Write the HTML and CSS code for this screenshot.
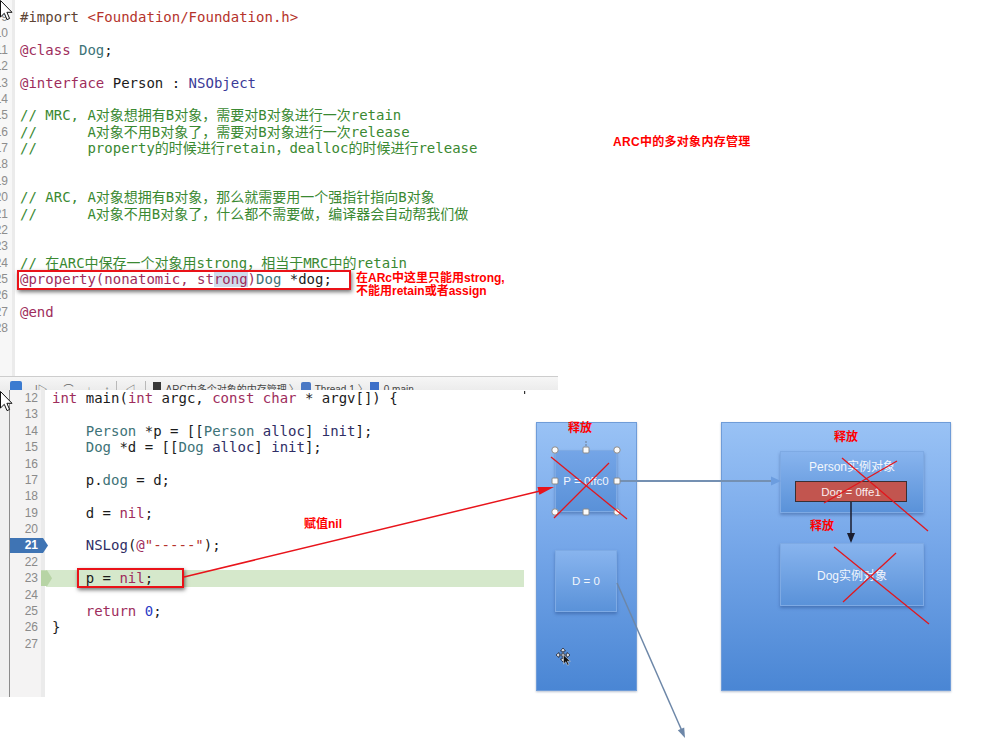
FILE: index.html
```html
<!DOCTYPE html>
<html lang="zh-CN">
<head>
<meta charset="utf-8">
<title>ARC中的多对象内存管理</title>
<link rel="stylesheet" href="styles.css">
</head>
<body>
<div class="page">
  <div class="top">
    <div class="editor-top">
      <div class="code-top">
        <div class="row"><span class="num">9</span><span class="src"><span class="p">#import</span> <span class="s">&lt;Foundation/Foundation.h&gt;</span></span></div>
        <div class="row"><span class="num">10</span><span class="src"></span></div>
        <div class="row"><span class="num">11</span><span class="src"><span class="k">@class</span> <span class="t">Dog</span>;</span></div>
        <div class="row"><span class="num">12</span><span class="src"></span></div>
        <div class="row"><span class="num">13</span><span class="src"><span class="k">@interface</span> Person : <span class="f">NSObject</span></span></div>
        <div class="row"><span class="num">14</span><span class="src"></span></div>
        <div class="row"><span class="num">15</span><span class="src c">// MRC, A对象想拥有B对象，需要对B对象进行一次retain</span></div>
        <div class="row"><span class="num">16</span><span class="src c">//      A对象不用B对象了，需要对B对象进行一次release</span></div>
        <div class="row"><span class="num">17</span><span class="src c">//      property的时候进行retain，dealloc的时候进行release</span></div>
        <div class="row"><span class="num">18</span><span class="src"></span></div>
        <div class="row"><span class="num">19</span><span class="src"></span></div>
        <div class="row"><span class="num">20</span><span class="src c">// ARC, A对象想拥有B对象，那么就需要用一个强指针指向B对象</span></div>
        <div class="row"><span class="num">21</span><span class="src c">//      A对象不用B对象了，什么都不需要做，编译器会自动帮我们做</span></div>
        <div class="row"><span class="num">22</span><span class="src"></span></div>
        <div class="row"><span class="num">23</span><span class="src"></span></div>
        <div class="row"><span class="num">24</span><span class="src c">// 在ARC中保存一个对象用strong，相当于MRC中的retain</span></div>
        <div class="row"><span class="num">25</span><span class="src"><span class="k">@property(nonatomic, st<span class="sel">rong</span>)</span><span class="t">Dog</span> *dog;</span></div>
        <div class="row"><span class="num">26</span><span class="src"></span></div>
        <div class="row"><span class="num">27</span><span class="src"><span class="k">@end</span></span></div>
        <div class="row"><span class="num">28</span><span class="src"></span></div>
      </div>
      <div class="jumpbar">
        <span class="jb-blue"></span>
        <span class="jb-txt jb-a">|▷</span>
        <span class="jb-txt jb-b">⌒</span>
        <span class="jb-txt jb-c">↓</span>
        <span class="jb-txt jb-d">↑</span>
        <span class="jb-sep jb-e"></span>
        <span class="jb-txt jb-f">◁</span>
        <span class="jb-sep jb-g"></span>
        <span class="jb-file"></span>
        <span class="jb-txt jb-h">ARC中多个对象的内存管理</span>
        <span class="jb-txt jb-i">〉</span>
        <span class="jb-thread"></span>
        <span class="jb-txt jb-j">Thread 1</span>
        <span class="jb-txt jb-k">〉</span>
        <span class="jb-frame"></span>
        <span class="jb-txt jb-l">0 main</span>
      </div>
      <div class="redbox redbox-top"></div>
      <div class="note note-strong">在ARc中这里只能用strong,<br>不能用retain或者assign</div>
    </div>
    <div class="aside">
      <p class="title">ARC中的多对象内存管理</p>
    </div>
  </div>

  <div class="bottom">
    <div class="editor-bottom">
      <div class="row2"><span class="num2">12</span><span class="src2"><span class="k">int</span> main(<span class="k">int</span> argc, <span class="k">const</span> <span class="k">char</span> * argv[]) {</span></div>
      <div class="row2"><span class="num2">13</span><span class="src2"></span></div>
      <div class="row2"><span class="num2">14</span><span class="src2">    <span class="t">Person</span> *p = [[<span class="t">Person</span> <span class="m">alloc</span>] <span class="m">init</span>];</span></div>
      <div class="row2"><span class="num2">15</span><span class="src2">    <span class="t">Dog</span> *d = [[<span class="t">Dog</span> <span class="m">alloc</span>] <span class="m">init</span>];</span></div>
      <div class="row2"><span class="num2">16</span><span class="src2"></span></div>
      <div class="row2"><span class="num2">17</span><span class="src2">    p.<span class="t">dog</span> = d;</span></div>
      <div class="row2"><span class="num2">18</span><span class="src2"></span></div>
      <div class="row2"><span class="num2">19</span><span class="src2">    d = <span class="k">nil</span>;</span></div>
      <div class="row2"><span class="num2">20</span><span class="src2"></span></div>
      <div class="row2"><span class="num2 bp"><span class="bp-n">21</span></span><span class="src2">    <span class="m">NSLog</span>(<span class="k">@</span><span class="s">"-----"</span>);</span></div>
      <div class="row2"><span class="num2">22</span><span class="src2"></span></div>
      <div class="row2 pc"><span class="num2">23</span><span class="src2">    p = <span class="k">nil</span>;</span></div>
      <div class="row2"><span class="num2">24</span><span class="src2"></span></div>
      <div class="row2"><span class="num2">25</span><span class="src2">    <span class="k">return</span> <span class="n">0</span>;</span></div>
      <div class="row2"><span class="num2">26</span><span class="src2">}</span></div>
      <div class="row2"><span class="num2">27</span><span class="src2"></span></div>
      <div class="redbox redbox-bottom"></div>
    </div>

    <div class="diagram">
      <div class="panel panel-stack">
        <span class="release rel-p">释放</span>
        <div class="node node-p">P = 0ffc0</div>
        <div class="node node-d">D = 0</div>
      </div>
      <div class="panel panel-heap">
        <span class="release rel-person">释放</span>
        <div class="node node-person">
          <span class="node-title">Person实例对象</span>
          <div class="field">Dog = 0ffe1</div>
        </div>
        <span class="release rel-dog">释放</span>
        <div class="node node-dog">Dog实例对象</div>
      </div>
    </div>
  </div>

  <div class="note note-nil">赋值nil</div>

  <svg class="overlay" width="1000" height="748" viewBox="0 0 1000 748">
    <line x1="184" y1="577" x2="540" y2="491" stroke="#e8141b" stroke-width="1.5"/>
    <polygon points="554,487 539.4,494.7 537.5,486.9" fill="#e8141b"/>
    <line x1="619" y1="481" x2="772" y2="481" stroke="#7490b2" stroke-width="2"/>
    <polygon points="781,481 771,476.5 771,485.5" fill="#6c9ddf"/>
    <line x1="617" y1="583" x2="682" y2="731" stroke="#6d87a8" stroke-width="1.5"/>
    <polygon points="685,738 684.2,727.4 677.8,730.2" fill="#6d87a8"/>
    <line x1="851" y1="502" x2="851" y2="534" stroke="#1b1d2e" stroke-width="1.5"/>
    <polygon points="851,543 847,533 855,533" fill="#1b1d2e"/>
    <line x1="586" y1="446" x2="586" y2="440" stroke="#6a7a90" stroke-width="1" stroke-dasharray="2 1"/>
    <g fill="#fbfbfb" stroke="#8a8a8a" stroke-width="1">
      <circle cx="555" cy="450" r="3.2"/>
      <circle cx="617" cy="450" r="3.2"/>
      <circle cx="555" cy="512" r="3.2"/>
      <circle cx="617" cy="512" r="3.2"/>
      <rect x="583" y="447" width="6" height="6" rx="1"/>
      <rect x="583" y="509" width="6" height="6" rx="1"/>
      <rect x="552" y="478" width="6" height="6" rx="1"/>
      <rect x="614" y="478" width="6" height="6" rx="1"/>
    </g>
    <g stroke="#e3161c" stroke-width="1.3">
      <line x1="551" y1="457" x2="627" y2="519"/>
      <line x1="609" y1="463" x2="554" y2="518"/>
      <line x1="842" y1="458" x2="928" y2="531"/>
      <line x1="897" y1="461" x2="824" y2="503"/>
      <line x1="834" y1="547" x2="929" y2="624"/>
      <line x1="843" y1="602" x2="896" y2="553"/>
    </g>
    <g transform="translate(555,647)">
      <path d="M8 1 L5.5 4 H7.3 V7.3 H4 V5.5 L1 8 L4 10.5 V8.7 H7.3 V12 H5.5 L8 15 L10.5 12 H8.7 V8.7 H12 V10.5 L15 8 L12 5.5 V7.3 H8.7 V4 H10.5 Z" fill="#f4f6fa" stroke="#1d2230" stroke-width="0.8"/>
      <path d="M8.5 8 V17 L10.8 14.8 L12.6 18.3 L14 17.6 L12.3 14.2 H15.4 Z" fill="#111" stroke="#eee" stroke-width="0.5"/>
    </g>
    <path d="M0.5 0.5 V17 L4.3 13.3 L7 19.6 L9.6 18.5 L6.9 12.3 H12 Z" fill="#fff" stroke="#111" stroke-width="1"/>
    <path d="M0.5 391.5 V408 L4.3 404.3 L7 410.6 L9.6 409.5 L6.9 403.3 H12 Z" fill="#fff" stroke="#111" stroke-width="1"/>
    <rect x="524" y="391" width="1.2" height="3" fill="#333"/>
  </svg>
</div>
</body>
</html>
```

FILE: styles.css
```css
* {
  box-sizing: border-box;
  margin: 0;
  padding: 0;
}

html, body {
  width: 1000px;
  height: 748px;
  background: #fff;
  overflow: hidden;
}

body {
  font-family: "Liberation Sans", "Noto Sans CJK SC", sans-serif;
  color: #1b1b1b;
}

.page {
  position: relative;
  width: 1000px;
  height: 748px;
}

/* ---------- top editor ---------- */
.top {
  display: flex;
  height: 390px;
}

.editor-top {
  position: relative;
  width: 558px;
  display: flex;
  flex-direction: column;
}

.code-top {
  height: 377px;
  padding-top: 9px;
  border-bottom: 1px solid #cdcdcd;
  background: linear-gradient(to right, #f7f7f7 0 12px, #ebebeb 12px 15px, #fff 15px);
}

.row {
  display: flex;
  height: 16.375px;
  line-height: 16.375px;
}

.num {
  width: 8px;
  flex: none;
  overflow: hidden;
  display: flex;
  justify-content: flex-end;
  font: 12px/16.375px "Liberation Sans", sans-serif;
  color: #8d8d8d;
}

.src {
  margin-left: 12px;
  white-space: pre;
  font: 14px/16.375px "DejaVu Sans Mono", "Noto Sans CJK SC", monospace;
  color: #1b1b1b;
}

/* syntax colours */
.k { color: #9e2d5c; }
.t { color: #3e7378; }
.c { color: #3a8932; }
.p { color: #5e4535; }
.s { color: #b5332c; }
.f { color: #3b3b98; }
.m { color: #2f2e66; }
.n { color: #2c3bc6; }
.sel { background: #cfdcec; }

/* jump bar (partly covered by the lower editor) */
.jumpbar {
  height: 13px;
  overflow: hidden;
  display: flex;
  align-items: flex-start;
  padding-top: 4px;
  background: linear-gradient(#f6f6f6, #ececec);
  font: 10px/13px "Liberation Sans", "Noto Sans CJK SC", sans-serif;
  color: #555;
  white-space: nowrap;
}

.jb-blue {
  width: 12px;
  height: 12px;
  margin-left: 10px;
  border-radius: 2px;
  background: #3b7bd0;
}

.jb-txt {
  margin-top: 2px;
  color: #666;
}

.jb-a { margin-left: 13px; }
.jb-b { margin-left: 16px; }
.jb-c { margin-left: 13px; }
.jb-d { margin-left: 13px; }
.jb-e { margin-left: 6px; }
.jb-f { margin-left: 9px; }
.jb-g { margin-left: 9px; }
.jb-h { margin-left: 5px; color: #444; }
.jb-i { margin-left: 2px; }
.jb-j { margin-left: 4px; color: #444; }
.jb-k { margin-left: 3px; }
.jb-l { margin-left: 5px; color: #444; }

.jb-sep {
  width: 1px;
  height: 12px;
  background: #b9b9b9;
}

.jb-file {
  width: 8px;
  height: 12px;
  margin-left: 7px;
  margin-top: 1px;
  background: #383838;
}

.jb-thread {
  width: 10px;
  height: 12px;
  margin-left: 2px;
  margin-top: 1px;
  border-radius: 2px;
  background: #4a78c4;
}

.jb-frame {
  width: 9px;
  height: 12px;
  margin-left: 2px;
  margin-top: 1px;
  background: #3d6fc8;
}

/* red highlight boxes */
.redbox {
  position: absolute;
  border: 2px solid #ea1218;
  box-shadow: 1px 2px 4px rgba(0, 0, 0, 0.55);
}

.redbox-top {
  left: 17px;
  top: 270px;
  width: 334px;
  height: 20px;
}

.redbox-bottom {
  left: 77px;
  top: 178px;
  width: 107px;
  height: 20px;
}

.note {
  position: absolute;
  color: #ff0000;
  font: bold 12px/13px "Liberation Sans", "Noto Sans CJK SC", sans-serif;
  white-space: nowrap;
}

.note-strong {
  left: 356px;
  top: 272px;
}

.note-nil {
  left: 304px;
  top: 518px;
}

.aside {
  flex: 1;
  padding: 136px 0 0 55px;
}

.title {
  color: #ff0000;
  font: bold 12px/13px "Liberation Sans", "Noto Sans CJK SC", sans-serif;
  letter-spacing: 0.3px;
}

/* ---------- bottom editor ---------- */
.bottom {
  display: flex;
  height: 358px;
}

.editor-bottom {
  position: relative;
  width: 524px;
  height: 307px;
  flex: none;
  background: linear-gradient(to right, #f1f1f1 0 9px, #8c8c8c 9px 10px, #f4f3f3 10px 41px, #ebebeb 41px 45px, #fff 45px);
}

.row2 {
  position: relative;
  display: flex;
  height: 16.375px;
  line-height: 16.375px;
}

.num2 {
  position: relative;
  width: 41px;
  flex: none;
  padding-right: 3px;
  text-align: right;
  font: 12px/16.375px "Liberation Sans", sans-serif;
  color: #8a8a8a;
}

.src2 {
  position: relative;
  margin-left: 11px;
  white-space: pre;
  font: 14px/16.375px "DejaVu Sans Mono", "Noto Sans CJK SC", monospace;
  color: #1b1b1b;
}

.bp::before {
  content: "";
  position: absolute;
  left: 10px;
  top: 0.5px;
  width: 38px;
  height: 15px;
  background: #3f74b4;
  clip-path: polygon(0 0, 33px 0, 38px 50%, 33px 100%, 0 100%);
}

.bp-n {
  position: relative;
  color: #fff;
  font-weight: bold;
}

.pc::before {
  content: "";
  position: absolute;
  left: 46px;
  right: 0;
  top: 0;
  bottom: 0;
  background: #d5e8cb;
}

.pc::after {
  content: "";
  position: absolute;
  left: 41px;
  top: 0;
  width: 11px;
  height: 16px;
  background: #b7d4a5;
  clip-path: polygon(0 0, 6px 0, 11px 50%, 6px 100%, 0 100%);
}

/* ---------- diagram ---------- */
.diagram {
  position: relative;
  flex: 1;
}

.panel {
  position: absolute;
  top: 32px;
  height: 269px;
  border: 1px solid #6f9cd8;
  background: linear-gradient(#99c2f5, #76a7e9 45%, #4a86d4);
  box-shadow: 0 1px 2px rgba(20, 50, 100, 0.3);
}

.panel-stack {
  left: 12px;
  width: 101px;
}

.panel-heap {
  left: 197px;
  width: 230px;
}

.release {
  position: absolute;
  color: #ff0000;
  font: bold 12px/13px "Liberation Sans", "Noto Sans CJK SC", sans-serif;
  white-space: nowrap;
}

.rel-p { left: 31px; top: -1px; }
.rel-person { left: 112px; top: 8px; }
.rel-dog { left: 88px; top: 97px; }

.node {
  position: absolute;
  display: flex;
  align-items: center;
  justify-content: center;
  border: 1px solid #7eaae4;
  background: linear-gradient(#88b4ee, #5a92d9);
  box-shadow: 0 2px 3px rgba(20, 50, 110, 0.35);
  color: #f2f6fc;
  font: 11.5px "Liberation Sans", "Noto Sans CJK SC", sans-serif;
  white-space: nowrap;
}

.node-p {
  left: 18px;
  top: 27px;
  width: 62px;
  height: 62px;
  background: linear-gradient(#74a5e7, #5a91d8);
}

.node-d {
  left: 18px;
  top: 127px;
  width: 62px;
  height: 62px;
}

.node-person {
  left: 58px;
  top: 28px;
  width: 144px;
  height: 62px;
  flex-direction: column;
  justify-content: flex-start;
  padding-top: 8px;
  font-size: 12px;
}

.node-title {
  line-height: 14px;
}

.field {
  position: absolute;
  left: 14px;
  top: 29px;
  width: 112px;
  height: 21px;
  display: flex;
  align-items: center;
  justify-content: center;
  border: 1px solid #3a2f33;
  background: #c2554f;
  color: #fbeeee;
  font-size: 11.5px;
}

.node-dog {
  left: 58px;
  top: 120px;
  width: 144px;
  height: 63px;
  font-size: 12px;
}

/* ---------- overlay ---------- */
.overlay {
  position: absolute;
  left: 0;
  top: 0;
  pointer-events: none;
}
```
